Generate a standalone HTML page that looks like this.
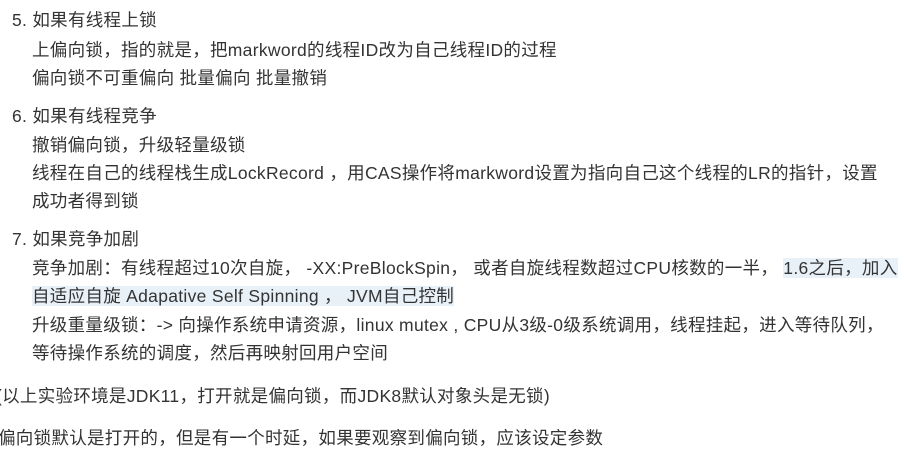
<!DOCTYPE html>
<html><head><meta charset="utf-8"><style>
body{margin:0;width:904px;height:458px;background:#fff;overflow:hidden;font-family:"Liberation Sans","Noto Sans CJK SC",sans-serif;color:#333;font-size:17.5px;letter-spacing:0.3px}
.l{position:absolute;white-space:nowrap;line-height:24px}
.h{background:#e9f1f8}
</style></head><body>
<div class="l" style="left:12px;top:8px">5. 如果有线程上锁</div>
<div class="l" style="left:32px;top:38px">上偏向锁，指的就是，把markword的线程ID改为自己线程ID的过程</div>
<div class="l" style="left:32px;top:66px">偏向锁不可重偏向 批量偏向 批量撤销</div>
<div class="l" style="left:12px;top:104px">6. 如果有线程竞争</div>
<div class="l" style="left:32px;top:133px">撤销偏向锁，升级轻量级锁</div>
<div class="l" style="left:32px;top:161px">线程在自己的线程栈生成LockRecord ，用CAS操作将markword设置为指向自己这个线程的LR的指针，设置</div>
<div class="l" style="left:32px;top:189px">成功者得到锁</div>
<div class="l" style="left:12px;top:227px">7. 如果竞争加剧</div>
<div class="l" style="left:32px;top:256px">竞争加剧：有线程超过10次自旋， -XX:PreBlockSpin， 或者自旋线程数超过CPU核数的一半， <span class="h">1.6之后，加入</span></div>
<div class="l" style="left:32px;top:284px"><span class="h">自适应自旋 Adapative Self Spinning ， JVM自己控制</span></div>
<div class="l" style="left:32px;top:313px">升级重量级锁：-&gt; 向操作系统申请资源，linux mutex , CPU从3级-0级系统调用，线程挂起，进入等待队列，</div>
<div class="l" style="left:32px;top:341px">等待操作系统的调度，然后再映射回用户空间</div>
<div class="l" style="left:-4px;top:384px">(以上实验环境是JDK11，打开就是偏向锁，而JDK8默认对象头是无锁)</div>
<div class="l" style="left:-2px;top:426px">偏向锁默认是打开的，但是有一个时延，如果要观察到偏向锁，应该设定参数</div>
</body></html>
